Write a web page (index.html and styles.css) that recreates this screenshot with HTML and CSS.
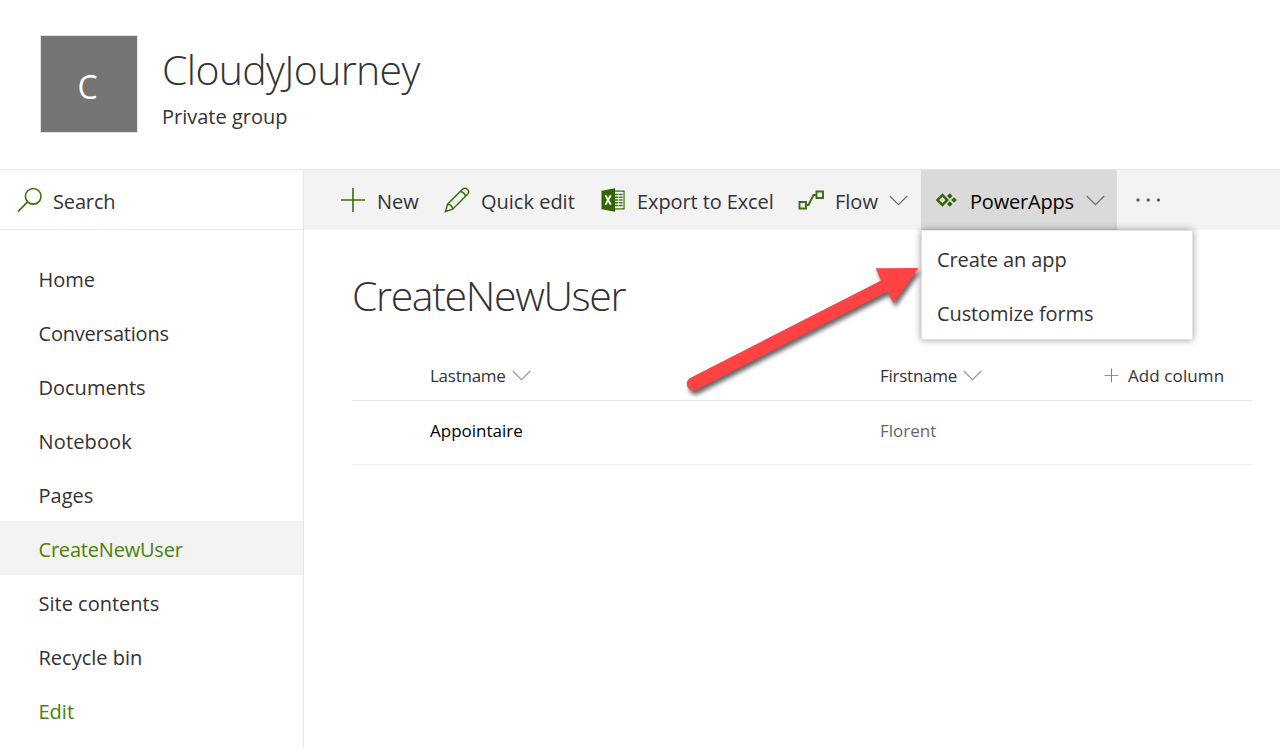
FILE: index.html
```html
<!DOCTYPE html>
<html lang="en">
<head>
<meta charset="utf-8">
<title>CloudyJourney - CreateNewUser</title>
<link rel="stylesheet" href="styles.css">
</head>
<body>
<header class="site-header">
  <div class="logo">C</div>
  <div class="site-info">
    <div class="site-title">CloudyJourney</div>
    <div class="site-kind">Private group</div>
  </div>
</header>
<div class="layout">
  <aside class="sidebar">
    <div class="search">
      <svg class="icon" width="26" height="26" viewBox="0 0 26 26"><circle cx="16.2" cy="9.3" r="7.8"/><path d="M10.6 14.9L1 24.6"/></svg>
      <span class="search-label">Search</span>
    </div>
    <nav class="nav">
      <a class="nav-item">Home</a>
      <a class="nav-item tight">Conversations</a>
      <a class="nav-item">Documents</a>
      <a class="nav-item wide">Notebook</a>
      <a class="nav-item">Pages</a>
      <a class="nav-item selected">CreateNewUser</a>
      <a class="nav-item">Site contents</a>
      <a class="nav-item">Recycle bin</a>
      <a class="nav-item edit">Edit</a>
    </nav>
  </aside>
  <main class="main">
    <div class="commands">
      <div class="command new">
        <svg class="icon" width="26" height="26" viewBox="0 0 26 26"><path d="M1 13H25M13 1V25"/></svg>
        <span>New</span>
      </div>
      <div class="command quick">
        <svg class="icon pencil" width="26" height="26" viewBox="0 0 26 26"><path d="M1.5 24.5L3.6 17.2L18.5 2.3C20 .8 22 .8 23.4 2.2C25 3.6 25 5.8 23.6 7.3L8.7 22.2ZM3.6 17.2C6 17 8.8 19.6 8.7 22.2M16.4 4.5C18.8 4.7 21.2 7 21.4 9.4"/></svg>
        <span>Quick edit</span>
      </div>
      <div class="command export">
        <svg width="24" height="24" viewBox="0 0 24 24"><path d="M14 3.2H23V20.8H14" fill="#fff" stroke="#376c08" stroke-width="1.2"/><path d="M14 6.5H21.5M14 9.3H21.5M14 12H21.5M14 14.8H21.5M14 17.5H21.5" stroke="#376c08" stroke-width="1.5"/><path d="M17.7 5V19" stroke="#fff" stroke-width=".8"/><path d="M.5 2.8L14 .3V23.7L.5 21.2Z" fill="#326500"/><path d="M4.4 7.3L9.8 16.7M9.8 7.3L4.4 16.7" stroke="#f3f3f3" stroke-width="2"/></svg>
        <span>Export to Excel</span>
      </div>
      <div class="command flow">
        <svg class="icon heavy" width="26" height="20" viewBox="0 0 26 20"><path d="M1.5 12H8V18.5H1.5ZM18.5 1.5H25V8H18.5ZM8 15H10.5L15.5 5H18.5"/></svg>
        <span>Flow</span>
        <svg class="chevron" width="19" height="11" viewBox="0 0 19 11"><path d="M.8 1L9.5 9.7L18.2 1"/></svg>
      </div>
      <div class="command powerapps">
        <svg width="22" height="14" viewBox="0 0 22 14"><path d="M6.4 2L11.2 7L6.4 12L1.6 7Z" fill="none" stroke="#326500" stroke-width="2.5"/><path d="M13.8 .2L16.6 3L13.8 5.8L11 3ZM13.8 8.2L16.6 11L13.8 13.8L11 11ZM18 4.2L20.8 7L18 9.8L15.2 7Z" fill="#326500"/></svg>
        <span>PowerApps</span>
        <svg class="chevron" width="19" height="11" viewBox="0 0 19 11"><path d="M.8 1L9.5 9.7L18.2 1"/></svg>
        <div class="menu">
          <a class="menu-item">Create an app</a>
          <a class="menu-item customize">Customize forms</a>
        </div>
      </div>
      <div class="more"><svg width="25" height="4" viewBox="0 0 25 4"><circle cx="2" cy="2" r="1.7"/><circle cx="12.2" cy="2" r="1.7"/><circle cx="22.4" cy="2" r="1.7"/></svg></div>
    </div>
    <section class="content">
      <h1 class="list-title">CreateNewUser</h1>
      <div class="row head">
        <div class="cell"><span class="field">Lastname</span><svg class="chevron light" width="19" height="11" viewBox="0 0 19 11"><path d="M.8 1L9.5 9.7L18.2 1"/></svg></div>
        <div class="cell"><span class="field">Firstname</span><svg class="chevron light" width="19" height="11" viewBox="0 0 19 11"><path d="M.8 1L9.5 9.7L18.2 1"/></svg></div>
        <div class="cell add"><svg width="15" height="15" viewBox="0 0 15 15"><path d="M.5 7.5H14.5" stroke="#8b9a91"/><path d="M7.5 .5V14.5" stroke="#5f9292"/></svg><span>Add column</span></div>
      </div>
      <div class="row item">
        <div class="cell primary">Appointaire</div>
        <div class="cell">Florent</div>
      </div>
    </section>
  </main>
</div>
<svg class="arrow" width="250" height="150" viewBox="680 255 250 150"><path d="M689.6 378.2L881 280.4L875.6 268.3L918.6 268L893.4 303L887.2 291.4L695.6 390.2A6.8 6.8 0 0 1 689.6 378.2Z"/></svg>
</body>
</html>
```
FILE: styles.css
```css
* { box-sizing: border-box; }
body {
  margin: 0;
  height: 748px;
  overflow: hidden;
  position: relative;
  display: flex;
  flex-direction: column;
  background: #fff;
  color: #333;
  font-family: "Segoe UI", "Open Sans", "Noto Sans", sans-serif;
  font-size: 20px;
}
svg { flex: none; display: block; }
span, a, .site-title, .site-kind, .list-title { white-space: nowrap; }
.site-header {
  height: 170px;
  flex: none;
  display: flex;
  padding: 35px 0 0 40px;
  gap: 24px;
  border-bottom: 1px solid #e6e6e6;
}
.logo {
  width: 98px;
  height: 98px;
  border: 1px solid #e2e2e2;
  background: #757575;
  color: #fff;
  font-size: 32px;
  line-height: 102px;
  text-align: center;
  padding-right: 3px;
}
.site-title {
  font-size: 41px;
  font-weight: 300;
  line-height: 60px;
  padding-top: 4px;
  letter-spacing: -.65px;
}
.site-kind { line-height: 30px; padding-top: 3px; }
.layout { flex: 1; display: flex; }
.sidebar { width: 304px; border-right: 1px solid #e6e6e6; }
.search {
  height: 60px;
  display: flex;
  align-items: center;
  padding: 2px 0 0 17px;
  gap: 10px;
  border-bottom: 1px solid #e6e6e6;
}
.search-label { padding-top: 1px; letter-spacing: -.15px; }
.icon { fill: none; stroke: #3b6f08; stroke-width: 1.6; }
.search .icon { margin-top: -2px; }
.pencil { stroke-width: 1.5; }
.heavy { stroke-width: 1.9; }
.nav { padding-top: 21px; }
.nav-item { display: block; height: 54px; line-height: 57px; padding-left: 38.5px; }
.selected { background: #f3f3f3; letter-spacing: -.2px; }
.tight { letter-spacing: -.2px; }
.wide { letter-spacing: .15px; }
.selected, .edit { color: #498205; }
.main { flex: 1; }
.commands { height: 60px; display: flex; background: #f3f3f3; padding-left: 36px; }
.command { display: flex; align-items: center; height: 60px; }
.command span { line-height: 30px; padding-top: 3px; }
.new { width: 104px; gap: 11px; }
.quick { width: 157px; gap: 11px; }
.export { width: 197px; gap: 12px; letter-spacing: -.1px; }
.flow { width: 123px; gap: 11px; }
.chevron { fill: none; stroke: #6d6d6d; stroke-width: 1.2; }
.light { stroke: #999; }
.powerapps {
  width: 196px;
  padding-left: 15px;
  gap: 12px;
  position: relative;
  background: #dadada;
  color: #000;
  letter-spacing: -.2px;
}
.menu {
  position: absolute;
  left: 0;
  top: 60px;
  width: 272px;
  height: 110px;
  padding-top: 1px;
  background: #fff;
  border: 1px solid #e4e4e4;
  box-shadow: 0 0 7px rgba(0, 0, 0, .4);
  color: #333;
  letter-spacing: -.1px;
}
.menu-item { display: block; height: 54px; line-height: 56px; padding-left: 15px; }
.more { padding: 28px 0 0 19px; fill: #666; }
.content { padding: 34px 28px 0 48px; }
.list-title { margin: 0; font-size: 41px; font-weight: 300; line-height: 62px; letter-spacing: -1.35px; }
.row {
  display: grid;
  grid-template-columns: 450px 224px 1fr;
  padding-left: 78px;
  align-items: center;
  font-size: 17px;
}
.head { height: 75px; padding-top: 25px; border-bottom: 1px solid #e6e6e6; }
.item { height: 64px; padding-bottom: 5px; border-bottom: 1px solid #f2f2f2; color: #666; }
.cell { display: flex; align-items: center; gap: 6px; }
.field { letter-spacing: -.25px; }
.add { gap: 9px; letter-spacing: .1px; }
.primary { color: #000; }
.arrow {
  position: absolute;
  left: 680px;
  top: 255px;
  fill: #ff4343;
  filter: drop-shadow(2px 4px 2px rgba(0, 0, 0, .6));
}
```
